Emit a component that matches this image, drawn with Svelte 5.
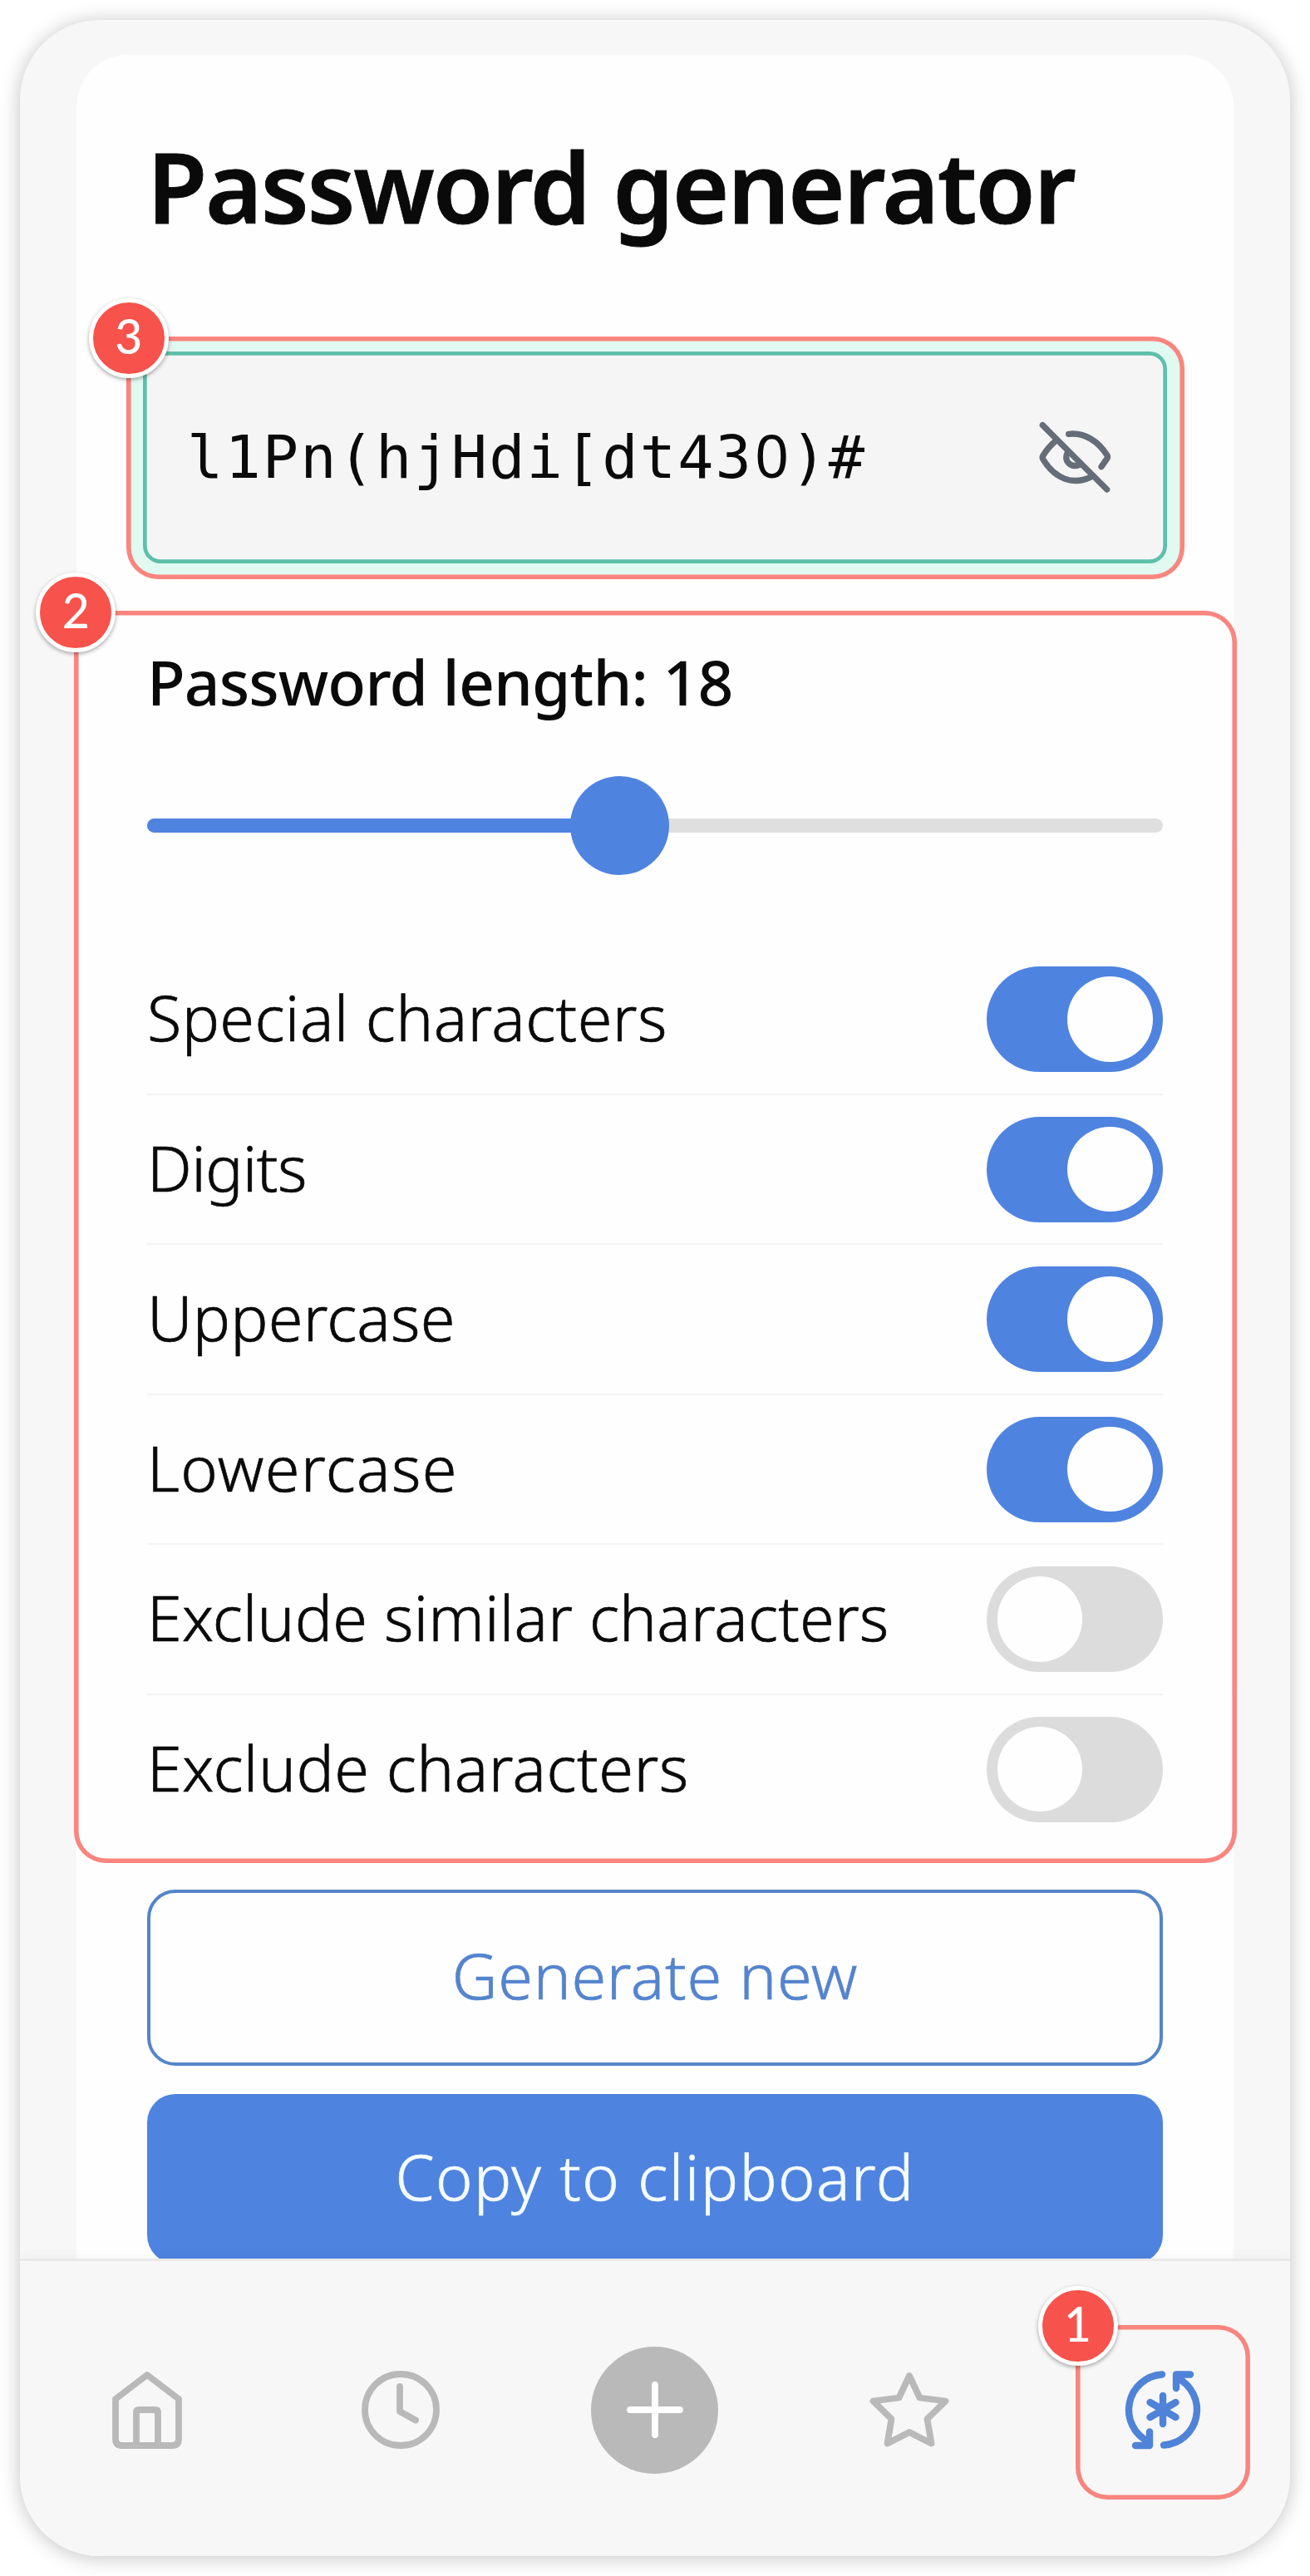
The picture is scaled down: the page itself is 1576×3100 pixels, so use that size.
<script>
  let length = $state(18);
  const password = ['l1Pn(hjHdi[dt43', '0', ')#'];
  const fill = 46.5;

  let options = $state([
    { label: 'Special characters', on: true, tracking: 0.4 },
    { label: 'Digits', on: true, tracking: -0.6 },
    { label: 'Uppercase', on: true, tracking: 0.2 },
    { label: 'Lowercase', on: true, tracking: 1.4 },
    { label: 'Exclude similar characters', on: false, tracking: 0.15 },
    { label: 'Exclude characters', on: false, tracking: 0.5 }
  ]);
</script>

<div class="device">
  <div class="scroll">
    <main class="sheet">
      <h1>Password generator</h1>

      <section class="callout password">
        <span class="badge">3</span>
        <div class="field">
          <span class="value">{password[0]}<span class="zero">{password[1]}</span>{password[2]}</span>
          <svg class="eye" viewBox="60 60 318 300">
            <path d="M103 95L335 327" />
            <path d="M197 127C252 120 303 152 336 204Q339 210 336 215L315 245" />
            <path d="M150 152C132 167 116 186 104 206Q101 211 104 217C148 290 212 312 275 283" />
            <path d="M193 193Q182 215 196 231Q212 248 236 238" />
          </svg>
        </div>
      </section>

      <section class="callout settings">
        <span class="badge">2</span>
        <div class="length">Password length: {length}</div>
        <div class="slider">
          <div class="track"><div class="fill" style="width:{fill}%"></div></div>
          <div class="thumb" style="left:{fill}%"></div>
        </div>
        <div class="options">
          {#each options as o}
            <div class="row">
              <span class="label" style="letter-spacing:{o.tracking}px">{o.label}</span>
              <button class="toggle" class:on={o.on} aria-label={o.label} onclick={() => (o.on = !o.on)}>
                <span class="knob"></span>
              </button>
            </div>
          {/each}
        </div>
      </section>

      <button class="btn outline">Generate new</button>
      <button class="btn solid">Copy to clipboard</button>
    </main>
  </div>

  <nav>
    <div class="item">
      <svg class="icon" viewBox="-50 -50 100 100">
        <path d="M0-42L-38-13V35Q-38 43-30 43H30Q38 43 38 35V-13Z" />
        <path d="M-13 43V3Q-13 0-10 0H10Q13 0 13 3V43" />
      </svg>
    </div>
    <div class="item">
      <svg class="icon" viewBox="-50 -50 100 100">
        <circle r="43" />
        <path d="M-1-28V2L18 12.500" />
      </svg>
    </div>
    <div class="item">
      <div class="add">
        <svg class="icon" viewBox="-50 -50 100 100"><path d="M-30 0H30M0-30V30" /></svg>
      </div>
    </div>
    <div class="item">
      <svg class="icon" viewBox="-50 -50 100 100">
        <path d="M0-41L12.500-14.500L43.500-10.500L21.500 11L26.500 40.500L0 27L-26.500 40.500L-21.500 11L-43.500-10.500L-12.500-14.500Z" />
      </svg>
    </div>
    <div class="item">
      <div class="callout active"><span class="badge">1</span></div>
      <svg class="icon blue" viewBox="-50 -50 100 100">
        <path d="M-1-42.500A42.700 42.700 0 0 0-17 38.500" />
        <path d="M-16 26.500V43H-33" />
        <path d="M1 42.500A42.700 42.700 0 0 0 17-38.500" />
        <path d="M16-26V-42.500H33" />
        <path d="M0-17V17M-15.500-9L15.500 9M-15.500 9L15.500-9" />
      </svg>
    </div>
  </nav>
</div>

<style>
  :global(body) {
    background: #fff;
    overflow: hidden;
  }
  * {
    box-sizing: border-box;
  }
  button {
    font: inherit;
    margin: 0;
    padding: 0;
    border: 0;
  }
  .device {
    width: 1528px;
    height: 3052px;
    margin: 24px;
    border-radius: 96px;
    background: #f7f7f7;
    box-shadow: 0 2px 24px rgba(0, 0, 0, 0.24);
    font-family: 'Noto Sans', sans-serif;
    color: #0a0a0a;
    display: flex;
    flex-direction: column;
  }
  .scroll {
    height: 2694px;
    overflow: hidden;
    padding: 42px 68px 0;
    border-radius: 96px 96px 0 0;
  }
  .sheet {
    height: 2900px;
    background: #fefefe;
    border-radius: 62px 62px 0 0;
    padding: 97px 85px 0;
  }
  h1 {
    margin: 0;
    font-size: 117.6px;
    font-weight: 600;
    line-height: 120px;
    letter-spacing: -2.2px;
    white-space: nowrap;
    -webkit-text-stroke: 0.8px currentColor;
  }
  .callout {
    position: relative;
    border-radius: 38px;
    box-shadow: inset 0 0 0 5.6px #fa857f;
  }
  .badge {
    position: absolute;
    left: -45.3px;
    top: -46.5px;
    width: 96px;
    height: 96px;
    border: 5px solid #fff;
    border-radius: 50%;
    background: #f7524b;
    box-shadow: 0 2px 5px rgba(0, 0, 0, 0.35);
    color: #fff;
    font: 500 57px/81px Lato, sans-serif;
    text-align: center;
  }
  .password {
    width: 1273px;
    height: 292px;
    margin: 122px 0 0 -25px;
    padding: 18px 21.5px 19.5px 20px;
    background: #e0f9f1;
  }
  .field {
    height: 100%;
    box-shadow: inset 0 0 0 4.7px #5ebfaa;
    border-radius: 21px;
    background: #f5f5f5;
    padding: 0 57.5px 0 53px;
    display: flex;
    align-items: center;
    justify-content: space-between;
  }
  .value {
    font: 72px/100px 'DejaVu Sans Mono', monospace;
    letter-spacing: 2.05px;
    white-space: nowrap;
  }
  .zero {
    display: inline-block;
    width: 45.4px;
    font-family: 'Noto Sans', sans-serif;
    letter-spacing: 0;
    line-height: 1;
    text-align: center;
  }
  .eye {
    width: 106px;
    height: 100px;
    fill: none;
    stroke: #656d78;
    stroke-width: 22;
    stroke-linecap: round;
    stroke-linejoin: round;
  }
  .settings {
    width: 1399.5px;
    height: 1506.5px;
    margin: 38px 0 0 -88.5px;
    padding: 35px 89px 0 88.5px;
  }
  .length {
    font-size: 75px;
    font-weight: 500;
    line-height: 100px;
    letter-spacing: -0.95px;
  }
  .slider {
    position: relative;
    height: 119px;
    margin-top: 63.5px;
    display: flex;
    align-items: center;
  }
  .track {
    flex: 1;
    height: 17px;
    border-radius: 9px;
    background: #dfdfdf;
    overflow: hidden;
  }
  .fill {
    height: 100%;
    background: #4f83e0;
  }
  .thumb {
    position: absolute;
    width: 119px;
    height: 119px;
    margin-left: -59.5px;
    border-radius: 50%;
    background: #4f83e0;
  }
  .options {
    margin-top: 84.8px;
  }
  .row {
    height: 180.5px;
    border-bottom: 2px solid #f4f4f4;
    display: flex;
    align-items: center;
    justify-content: space-between;
  }
  .row:last-child {
    border-bottom-color: transparent;
  }
  .label {
    font-size: 75.6px;
    font-weight: 300;
    line-height: 100px;
    padding-bottom: 5px;
    -webkit-text-stroke: 0.7px currentColor;
  }
  .toggle {
    width: 212px;
    height: 127px;
    padding: 0 12.5px;
    border-radius: 64px;
    background: #dcdcdc;
    display: flex;
    align-items: center;
  }
  .toggle.on {
    background: #4f83e0;
    justify-content: flex-end;
  }
  .knob {
    width: 102.5px;
    height: 102.5px;
    border-radius: 50%;
    background: #fefefe;
  }
  .btn {
    display: block;
    width: 1222px;
    border-radius: 34px;
    font-size: 75.6px;
    font-weight: 300;
    line-height: 100px;
    -webkit-text-stroke: 0.7px currentColor;
  }
  .outline {
    height: 212px;
    margin-top: 32px;
    padding-bottom: 6px;
    border: 4px solid #5584c8;
    background: #fefefe;
    color: #5584ce;
    letter-spacing: 0.7px;
  }
  .solid {
    height: 204px;
    margin-top: 34.5px;
    padding-bottom: 6px;
    background: #4f83e0;
    color: #f4fbff;
    letter-spacing: 1.4px;
  }
  nav {
    flex: 1;
    position: relative;
    display: grid;
    grid-template-columns: repeat(5, 1fr);
    padding-top: 3px;
    border-top: 3px solid #e9e9e9;
    border-radius: 0 0 96px 96px;
    background: #f7f7f7;
    box-shadow: 0 -4px 14px rgba(0, 0, 0, 0.03);
    clip-path: inset(-30px 0 0 0 round 0 0 96px 96px);
  }
  .item {
    position: relative;
    display: flex;
    align-items: center;
    justify-content: center;
  }
  .icon {
    width: 100px;
    height: 100px;
    fill: none;
    stroke: #b9b9b9;
    stroke-width: 7.8;
    stroke-linecap: round;
    stroke-linejoin: round;
  }
  .add {
    width: 153px;
    height: 153px;
    border-radius: 50%;
    background: #b9b9b9;
    display: flex;
    align-items: center;
    justify-content: center;
  }
  .add .icon {
    stroke: #fff;
  }
  .icon.blue {
    stroke: #4f83d8;
    stroke-width: 8.4;
  }
  .active {
    position: absolute;
    left: 47.5px;
    top: 73.5px;
    width: 210.5px;
    height: 210.5px;
    box-shadow: inset 0 0 0 5.6px #f8857f;
  }
</style>
